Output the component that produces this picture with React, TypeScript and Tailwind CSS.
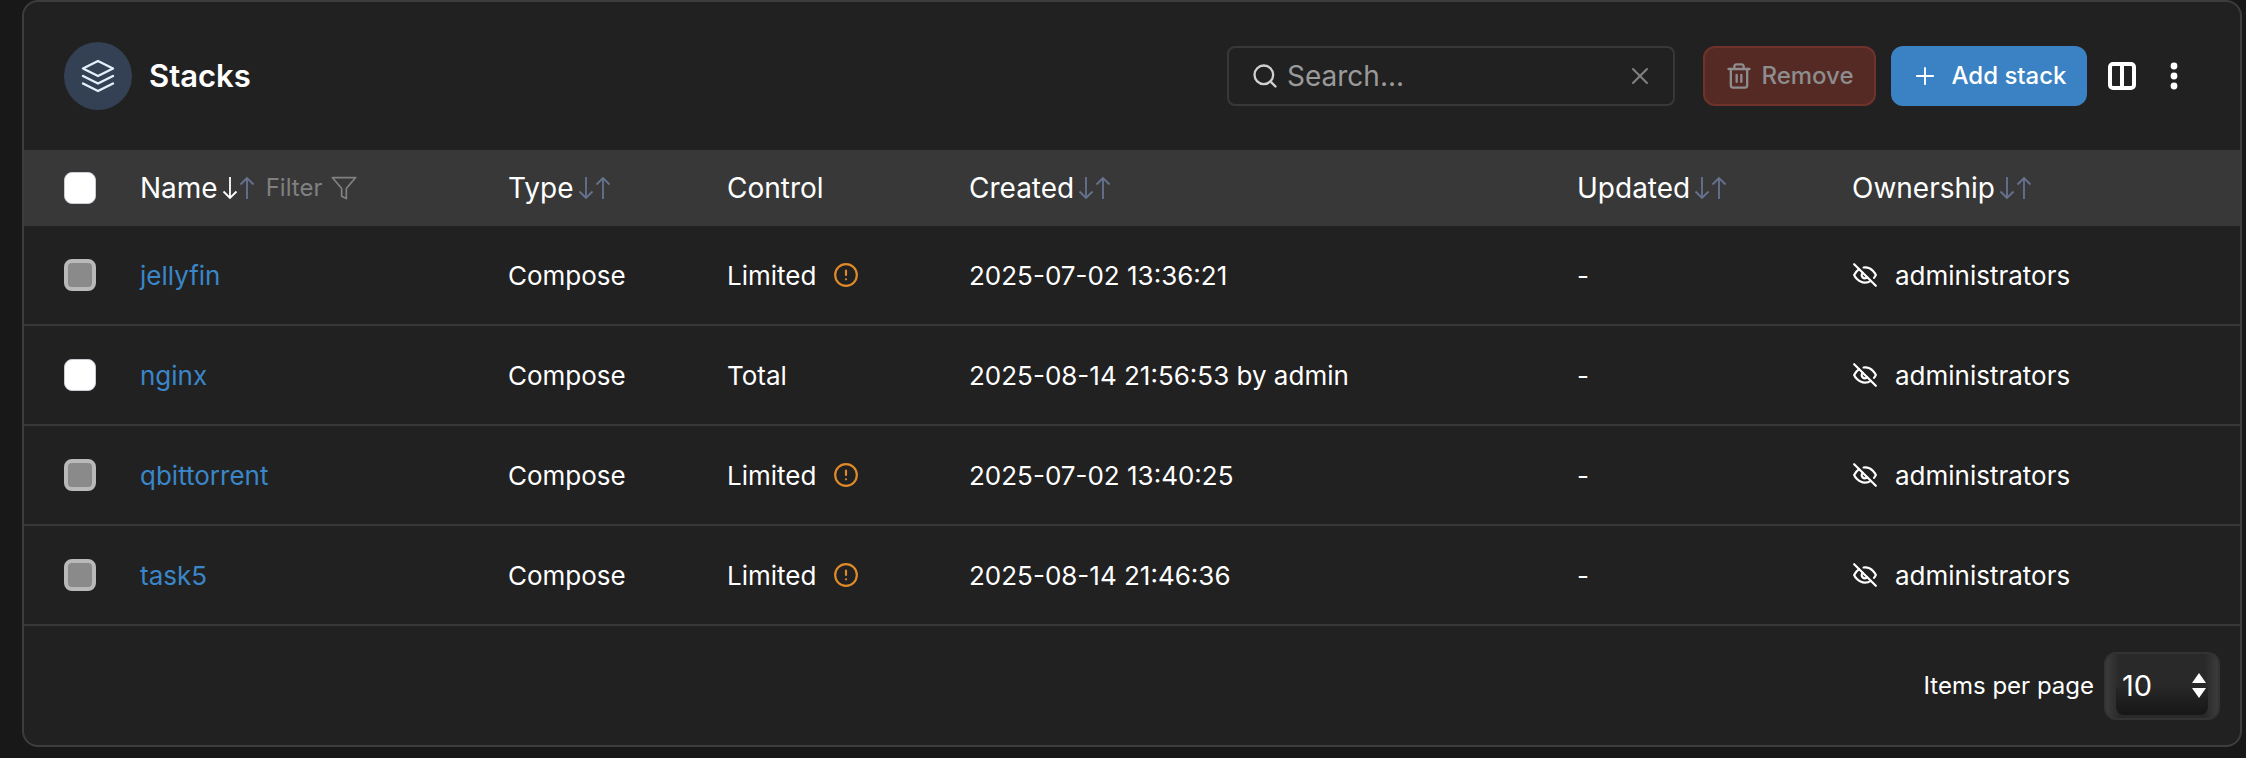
import React from "react";
import { CircleAlert, Plus, Search, Trash2, X } from "lucide-react";
import { FiFilter, FiLayers } from "react-icons/fi";

const columns = "grid grid-cols-[116px_368px_219px_242px_608px_275px_1fr] items-center";

const stacks = [
    { name: "jellyfin", control: "Limited", created: "2025-07-02 13:36:21", limited: true },
    { name: "nginx", control: "Total", created: "2025-08-14 21:56:53 by admin", limited: false },
    { name: "qbittorrent", control: "Limited", created: "2025-07-02 13:40:25", limited: true },
    { name: "task5", control: "Limited", created: "2025-08-14 21:46:36", limited: true },
];

function SortIcons({ active }: { active?: boolean }) {
    return (
        <span className="flex items-center ml-[4px]">
            <svg viewBox="0 0 16 24" className={`w-4 h-6 ${active ? "text-white" : "text-[#66738f]"}`} fill="none" stroke="currentColor" strokeWidth={1.8}>
                <path d="M8 1v21M1.5 15.5 8 22l6.5-6.5" />
            </svg>
            <svg viewBox="0 0 16 24" className="w-4 h-6 ml-[1px] text-[#66738f]" fill="none" stroke="currentColor" strokeWidth={1.8}>
                <path d="M8 23V2M1.5 8.5 8 2l6.5 6.5" />
            </svg>
        </span>
    );
}

function Checkbox({ disabled }: { disabled?: boolean }) {
    if (disabled) {
        return <div className="w-8 h-8 rounded-lg bg-[#8a8a8a] border-4 border-[#b9b9b9]" />;
    }
    return <div className="w-8 h-8 rounded-lg bg-white border-[1.5px] border-[#c9ccd4]" />;
}

function EyeOffIcon() {
    return (
        <svg viewBox="0 0 24 24" className="w-[26px] h-[26px] mr-[17px]" fill="none" stroke="currentColor" strokeWidth={2} strokeLinecap="round" strokeLinejoin="round">
            <path d="M9.88 9.88a3 3 0 1 0 4.24 4.24" />
            <path d="M10.73 5.08A10.43 10.43 0 0 1 12 5c7 0 10 7 10 7a13.16 13.16 0 0 1-1.67 2.68" />
            <path d="M6.61 6.61A13.526 13.526 0 0 0 2 12s3 7 10 7a9.74 9.74 0 0 0 5.39-1.61" />
            <path d="M2 2l20 20" />
        </svg>
    );
}

export default function App() {
    return (
        <div className="h-[758px] bg-[#181818] pl-[22px] pr-1 font-['Inter',sans-serif] text-white overflow-hidden">
            <div className="h-[747px] bg-[#212121] border-2 border-[#3d3d3d] rounded-2xl flex flex-col overflow-hidden">
                <div className="h-[148px] flex items-center pl-10 pr-[62px] shrink-0">
                    <div className="w-[68px] h-[68px] rounded-full bg-[#344054] flex items-center justify-center mr-[17px] -mt-[1px]">
                        <FiLayers className="w-9 h-9 text-[#e3effa]" strokeWidth={1.6} />
                    </div>
                    <h1 className="text-[31px] font-semibold">Stacks</h1>
                    <div className="ml-auto w-[448px] h-[60px] rounded-lg border-2 border-[#383838] flex items-center px-[22px] -mt-[1px]">
                        <Search className="w-7 h-7 text-[#d0d0d0] mr-[8px]" strokeWidth={2} />
                        <span className="text-[28px] text-[#9a9a9a] flex-1">Search...</span>
                        <X className="w-7 h-7 text-[#808080] -mr-[3px]" strokeWidth={1.75} />
                    </div>
                    <button className="ml-7 w-[173px] h-[60px] rounded-xl bg-[#562a24] border-2 border-[#6f332b] flex items-center justify-center gap-2 text-[24px] text-[#8d8d8d] font-medium -mt-[1px]">
                        <Trash2 className="w-7 h-7" strokeWidth={2} />
                        Remove
                    </button>
                    <button className="ml-[15px] w-[196px] h-[60px] rounded-xl bg-[#3a82c3] flex items-center justify-center gap-3 text-[24px] font-medium -mt-[1px]">
                        <Plus className="w-7 h-7" strokeWidth={1.6} />
                        Add stack
                    </button>
                    <svg viewBox="0 0 28 28" className="ml-[21px] w-7 h-7 shrink-0" fill="none" stroke="currentColor" strokeWidth={4}>
                        <rect x="2" y="2" width="24" height="24" rx="3" />
                        <path d="M14 2v24" />
                    </svg>
                    <svg viewBox="0 0 8 28" className="ml-[34px] w-2 h-7 shrink-0" fill="currentColor">
                        <circle cx="4" cy="4" r="3.4" />
                        <circle cx="4" cy="14" r="3.4" />
                        <circle cx="4" cy="24" r="3.4" />
                    </svg>
                </div>
                <div className={`${columns} h-[76px] bg-[#383838] text-[28px] font-normal shrink-0`}>
                    <div className="pl-10"><Checkbox /></div>
                    <div className="flex items-center">
                        Name
                        <SortIcons active />
                        <span className="ml-[11px] text-[24px] font-normal text-[#808080]">Filter</span>
                        <FiFilter className="ml-2 w-7 h-7 text-[#808080]" strokeWidth={1.5} />
                    </div>
                    <div className="flex items-center">Type<SortIcons /></div>
                    <div>Control</div>
                    <div className="flex items-center">Created<SortIcons /></div>
                    <div className="flex items-center">Updated<SortIcons /></div>
                    <div className="flex items-center">Ownership<SortIcons /></div>
                </div>
                {stacks.map((stack) => (
                    <div key={stack.name} className={`${columns} h-[100px] border-b-2 border-[#383838] text-[26px] shrink-0`}>
                        <div className="pl-10"><Checkbox disabled={stack.limited} /></div>
                        <div className="text-[#3a86c8]">{stack.name}</div>
                        <div>Compose</div>
                        <div className="flex items-center">
                            {stack.control}
                            {stack.limited && <CircleAlert className="ml-[17px] w-[26px] h-[26px] text-[#e08a2a]" strokeWidth={2} />}
                        </div>
                        <div>{stack.created}</div>
                        <div>-</div>
                        <div className="flex items-center">
                            <EyeOffIcon />
                            administrators
                        </div>
                    </div>
                ))}
                <div className="flex-1 flex items-center justify-end pr-5">
                    <span className="text-[24px]">Items per page</span>
                    <div className="relative ml-[10px] w-[116px] h-[68px] rounded-xl border-2 border-[#333333] bg-[linear-gradient(to_right,#3c3c3c,#292929_12%,#292929_88%,#3c3c3c)] flex items-center pl-[16px] text-[29px] overflow-hidden">
                        <div className="absolute inset-x-[10px] top-[33px] bottom-[3px] bg-gradient-to-b from-[#272727] to-[#161616] rounded-b-lg" />
                        <span className="relative">10</span>
                        <span className="absolute right-[12px] top-[19px] flex flex-col gap-[5px]">
                            <span className="w-0 h-0 border-x-[7px] border-x-transparent border-b-[10px] border-b-white" />
                            <span className="w-0 h-0 border-x-[7px] border-x-transparent border-t-[10px] border-t-white" />
                        </span>
                    </div>
                </div>
            </div>
        </div>
    );
}
